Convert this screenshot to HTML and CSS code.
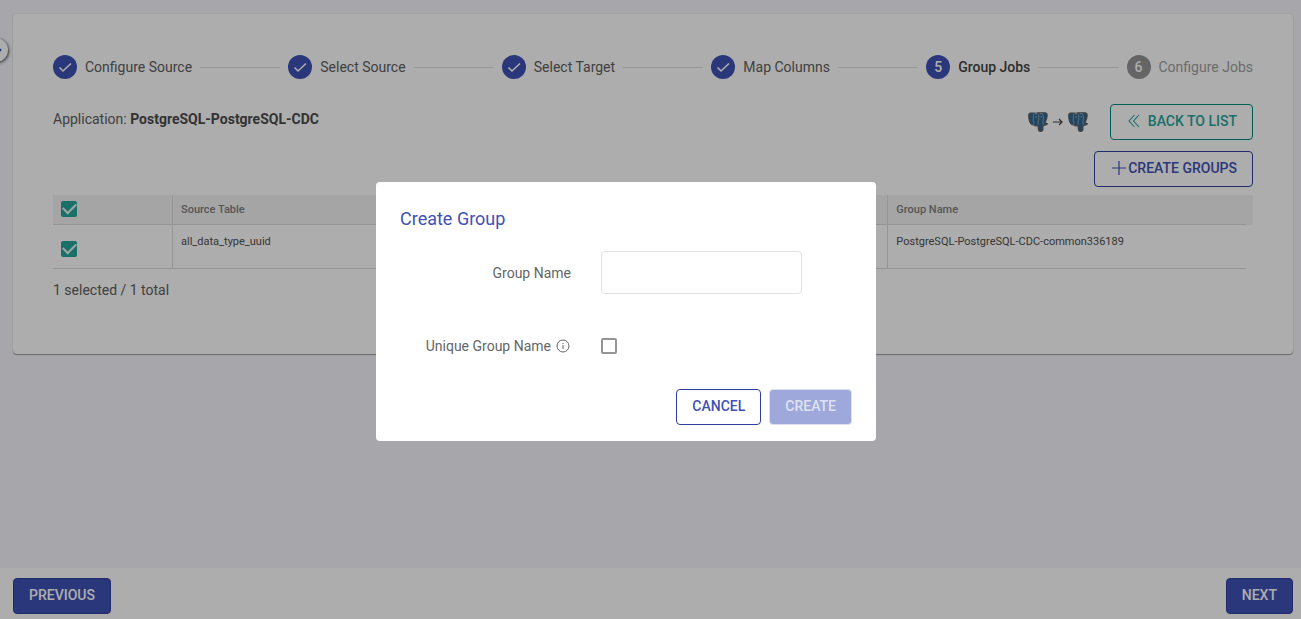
FILE: index.html
```html
<!DOCTYPE html>
<html lang="en">
<head>
<meta charset="utf-8">
<meta name="viewport" content="width=device-width, initial-scale=1">
<title>Group Jobs</title>
<link rel="stylesheet" href="styles.css">
</head>
<body>
<svg class="defs" aria-hidden="true">
  <symbol id="check" viewBox="0 0 24 24"><path d="M6.500 12.500l3.500 3.500L18 8.500" fill="none" stroke="currentColor" stroke-width="1.600"/></symbol>
  <symbol id="elephant" viewBox="0 0 20 20">
    <path d="M2 1h4.500l1.500.3L10 .8h7.500c1.300.3 1.800 1.200 1.700 2.700-.1 2.500-1 4.600-2.200 7.200l2.500.9c-.7 1.300-2 1.900-4.400 1.900l-.3 4.500c-.3 1-1 1.400-2.200 1.400-1.300 0-1.900-.6-2.100-1.600l-.5-4.300c-1.500.5-3 .4-4-.7-1.800.3-3-.4-3.800-2C1.200 8.700.7 6 .7 3.500.7 2 1 1.300 2 1z" fill="#336791" stroke="#5f6266" stroke-width="1.200"/>
    <path d="M6.200 2C5 3.500 5.300 6 5.300 8.500c0 2 .9 2.500.6 4M10.200 2.200c.9 2 .7 4.500.2 6.500-.3 1.600-.2 2.500-.2 4M14.500 2c1.200 1.800 1.200 4 .6 6.300-.3 1.300 0 2.500 0 4.200M6.500 1.700h3M11.500 1.700h3" fill="none" stroke="#a5b4c0" stroke-width=".8"/>
    <path d="M7.500 5h1.400M12.500 4.800h1.200" stroke="#b9c7d1" stroke-width="1"/>
  </symbol>
</svg>

<main class="page">
  <section class="card">
    <ol class="stepper">
      <li class="step"><span class="badge"><svg class="tick"><use href="#check"/></svg></span>Configure Source</li>
      <li class="line"></li>
      <li class="step"><span class="badge"><svg class="tick"><use href="#check"/></svg></span>Select Source</li>
      <li class="line"></li>
      <li class="step"><span class="badge"><svg class="tick"><use href="#check"/></svg></span>Select Target</li>
      <li class="line"></li>
      <li class="step"><span class="badge"><svg class="tick"><use href="#check"/></svg></span>Map Columns</li>
      <li class="line"></li>
      <li class="step current" aria-current="step"><span class="badge">5</span>Group Jobs</li>
      <li class="line"></li>
      <li class="step pending"><span class="badge">6</span>Configure Jobs</li>
    </ol>

    <div class="heading">
      <p class="application">Application: <strong>PostgreSQL-PostgreSQL-CDC</strong></p>
      <div class="flow">
        <svg class="logo"><use href="#elephant"/></svg>
        <svg class="arrow" viewBox="0 0 10 10"><path d="M0 5h9M6 2l3 3-3 3" fill="none" stroke="currentColor" stroke-width="1.200"/></svg>
        <svg class="logo"><use href="#elephant"/></svg>
      </div>
      <button type="button" class="btn outline teal"><svg class="back" viewBox="0 0 12 14"><path d="M6.500 1l-5.500 6 5.500 6M11 1L5.500 7 11 13" fill="none" stroke="currentColor" stroke-width="1.100"/></svg>Back to list</button>
    </div>
    <div class="actions">
      <button type="button" class="btn outline"><svg class="plus" viewBox="0 0 14 14"><path d="M0 7h14M7 0v14" stroke="currentColor" stroke-width="1.200"/></svg>Create groups</button>
    </div>

    <table class="jobs">
      <thead>
        <tr>
          <th class="pick"><input type="checkbox" class="box" checked aria-label="Select all"></th>
          <th>Source Table</th><th></th><th>Group Name</th><th class="gutter"></th>
        </tr>
      </thead>
      <tbody>
        <tr>
          <td class="pick"><input type="checkbox" class="box" checked aria-label="Select row"></td>
          <td>all_data_type_uuid</td><td></td><td>PostgreSQL-PostgreSQL-CDC-common336189</td><td class="gutter"></td>
        </tr>
      </tbody>
    </table>
    <p class="summary">1 selected / 1 total</p>
  </section>
</main>

<footer class="footer">
  <button type="button" class="btn solid">Previous</button>
  <button type="button" class="btn solid">Next</button>
</footer>

<button type="button" class="drawer" aria-label="Open menu"><svg viewBox="0 0 8 8"><path d="M2 1l3 3-3 3" fill="none" stroke="currentColor" stroke-width="2"/></svg></button>

<div class="backdrop">
  <form class="dialog" role="dialog" aria-modal="true" aria-labelledby="dialog-title">
    <h2 class="title" id="dialog-title">Create Group</h2>
    <div class="field">
      <label for="group-name">Group Name</label>
      <input type="text" id="group-name" class="text">
    </div>
    <div class="field">
      <label for="unique">Unique Group Name<svg class="info" viewBox="0 0 14 14"><circle cx="7" cy="7" r="6" fill="none" stroke="currentColor"/><path d="M7 6v4M7 4v1" stroke="currentColor"/></svg></label>
      <input type="checkbox" id="unique" class="box">
    </div>
    <div class="buttons">
      <button type="button" class="btn outline">Cancel</button>
      <button type="submit" class="btn solid" disabled>Create</button>
    </div>
  </form>
</div>
</body>
</html>
```
FILE: styles.css
```css
* { box-sizing: border-box; }
body {
  margin: 0;
  min-height: 100vh;
  display: flex;
  flex-direction: column;
  background: #f6f7fd;
  color: #606060;
  font: 14px/20px Roboto, "Liberation Sans", sans-serif;
}
.defs { position: absolute; width: 0; height: 0; }
.page { flex: 1; padding: 14px 8px 14px 13px; }
.card {
  min-height: 340px;
  padding: 40px;
  background: #fff;
  border-radius: 4px;
  box-shadow: 0 1px 1px #999, 0 0 2px #ddd;
}
.stepper { display: flex; align-items: center; gap: 8px; margin: 0; padding: 0; list-style: none; }
.step { display: flex; align-items: center; gap: 8px; height: 26px; white-space: nowrap; }
.line { flex: 1; height: 1px; background: #e0e0e0; }
.badge {
  display: grid;
  place-items: center;
  width: 24px;
  height: 24px;
  border-radius: 50%;
  background: #3f51b5;
  color: #fff;
  font-weight: 500;
}
.tick { width: 24px; height: 24px; }
.current { color: #444; font-weight: 500; }
.pending { color: #a0a0a0; }
.pending .badge { background: #969696; }

.heading { display: flex; align-items: center; margin-top: 24px; }
.application { flex: 1; margin: 0 0 6px; }
.application strong { color: #4c4c4c; }
.flow { display: flex; align-items: center; gap: 5px; margin-right: 22px; }
.logo { width: 20px; height: 20px; }
.arrow { width: 10px; height: 10px; color: #444; }
.actions { display: flex; justify-content: flex-end; margin: 11px 0 8px; }

.btn {
  display: inline-flex;
  align-items: center;
  height: 36px;
  padding: 0 15px 2px;
  border: 1px solid #303f9f;
  border-radius: 4px;
  font: 500 14px/20px Roboto, "Liberation Sans", sans-serif;
  text-transform: uppercase;
}
.outline { background: transparent; color: #3f51b5; }
.solid { background: #3f51b5; color: #fff; }
.teal { border-color: #00897b; color: #26a69a; }
.back { width: 12px; height: 14px; margin: 0 8px 0 2px; }
.plus { width: 14px; height: 14px; margin: 0 2px; }

.jobs { width: 100%; border-spacing: 0; table-layout: fixed; font-size: 11px; line-height: 16px; }
.jobs th, .jobs td {
  padding: 9px 8px 8px;
  border-right: 1px solid #dcdcdc;
  border-bottom: 1px solid #dcdcdc;
  text-align: left;
  vertical-align: top;
}
.jobs th { height: 30px; padding: 7px 8px 6px; background: #f4f4f4; color: #808080; font-weight: 500; }
.jobs td { height: 44px; color: #505050; }
.jobs .pick { width: 10%; }
.jobs th.pick { padding-top: 6px; }
.jobs td.pick { padding-top: 16px; }
.jobs th:nth-child(4), .jobs td:nth-child(4) { border-right: 0; }
.jobs .gutter { width: 7px; padding: 0; border: 0; }
.summary { margin: 11px 0 0; }

.box {
  appearance: none;
  display: block;
  width: 16px;
  height: 16px;
  margin: 0;
  border: 2px solid #949494;
  border-radius: 2px;
  background: #fff;
}
.box:checked { display: grid; place-items: center; border: 0; background: #26a69a; }
.box:checked::after {
  content: "";
  width: 11px;
  height: 6px;
  border: solid #e8f4f2;
  border-width: 0 0 2px 2px;
  transform: translateY(-2px) rotate(-45deg);
}

.footer {
  display: flex;
  justify-content: space-between;
  padding: 10px 8px 5px 13px;
  background: #fff;
}
.drawer {
  position: absolute;
  top: 38px;
  left: -16px;
  display: grid;
  place-items: center end;
  width: 24px;
  height: 24px;
  padding: 0 5px 0 0;
  border: 0;
  border-radius: 50%;
  background: #fff;
  color: #3f51b5;
  box-shadow: 1px 1px 3px #555;
}
.drawer svg { width: 6px; height: 8px; }

.backdrop {
  position: fixed;
  inset: 0;
  display: grid;
  place-items: center;
  padding: 4px 49px 0 0;
  background: rgba(0, 0, 0, .32);
}
.dialog {
  width: 500px;
  max-width: 100%;
  padding: 24px 24px 16px;
  border-radius: 4px;
  background: #fff;
  color: #666;
}
.title { margin: 0 0 20px; color: #3f51b5; font-size: 18px; font-weight: 400; line-height: 25px; }
.field { display: grid; grid-template-columns: 171px 201px; column-gap: 30px; align-items: center; margin-bottom: 42px; }
.field + .field { margin-bottom: 33px; }
.field label { display: flex; align-items: center; justify-content: flex-end; gap: 5px; }
.text { width: 100%; height: 43px; padding: 0 12px; border: 1px solid #e2e2e2; border-radius: 4px; font: inherit; color: inherit; }
.info { width: 14px; height: 14px; margin-right: 1px; }
.buttons { display: flex; justify-content: flex-end; gap: 8px; }
.solid:disabled { border-color: #dde0f2; background: #9fa8da; color: #dfe2f4; }
```
